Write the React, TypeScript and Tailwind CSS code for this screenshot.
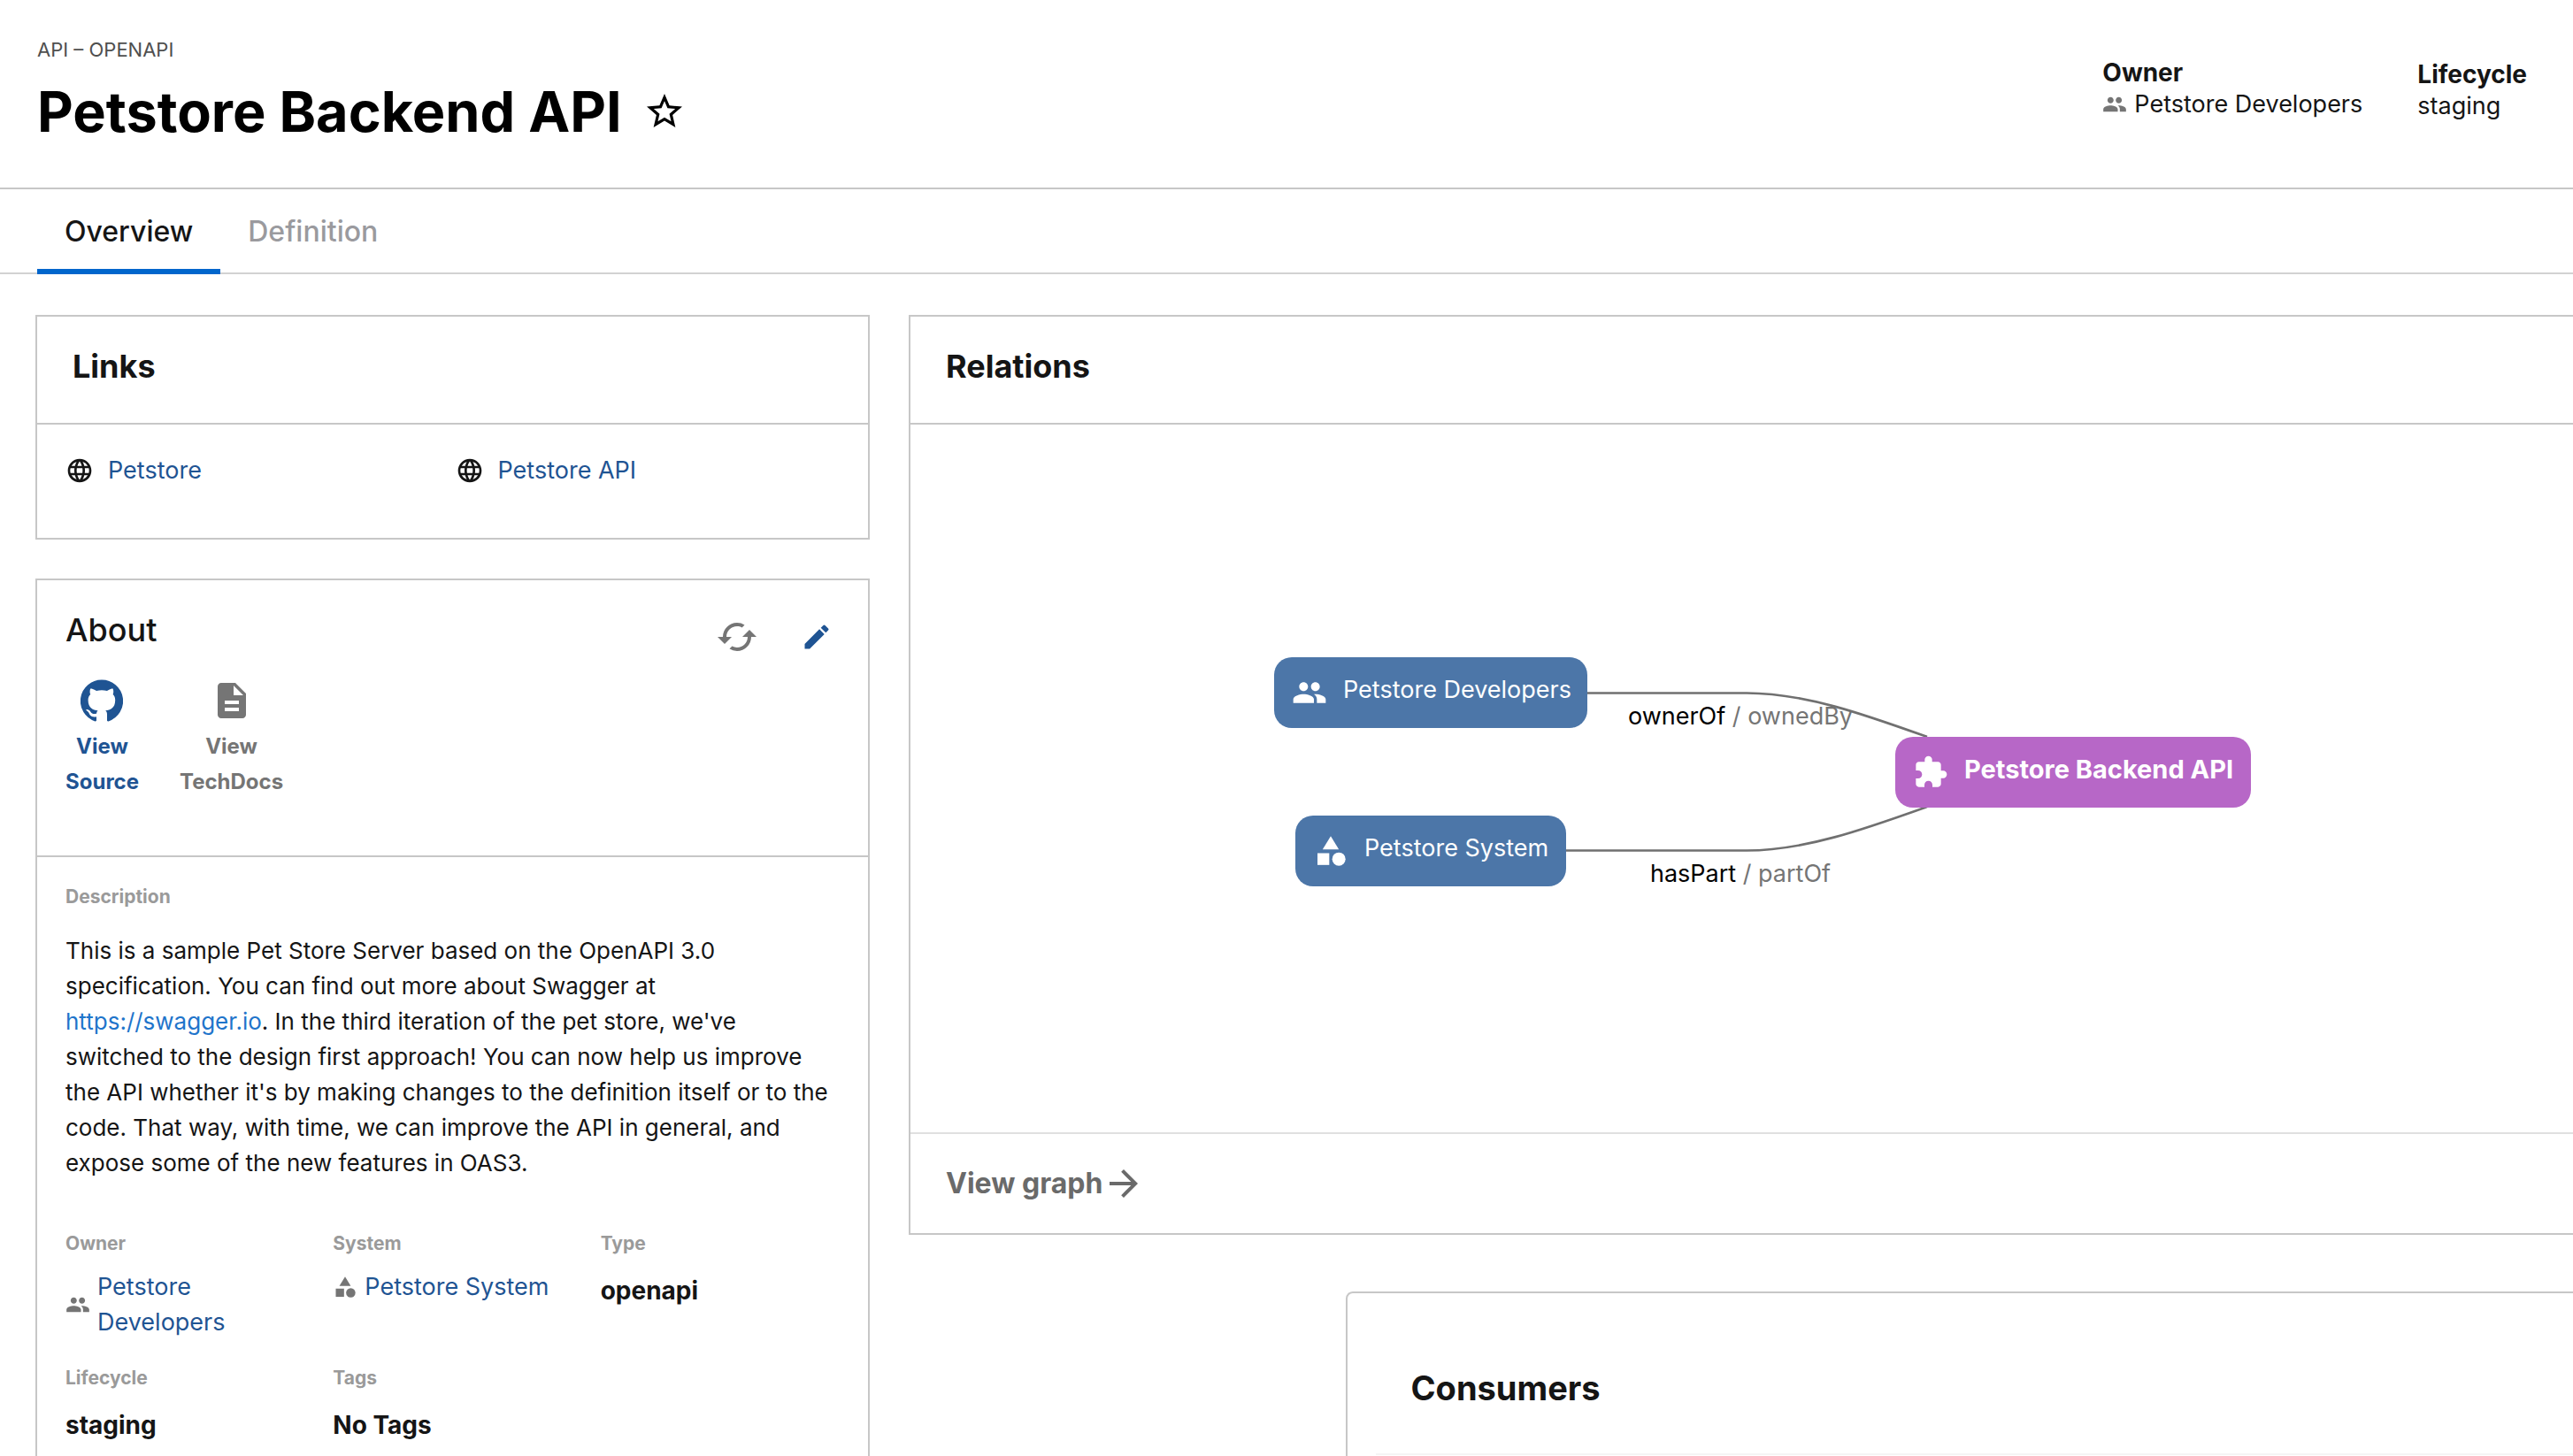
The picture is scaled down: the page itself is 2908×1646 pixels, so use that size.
import React from "react";
import {
  MdArrowForward,
  MdCached,
  MdCategory,
  MdDescription,
  MdEdit,
  MdExtension,
  MdLanguage,
  MdPeople,
  MdStarBorder,
} from "react-icons/md";

function GitHubIcon({ className }: { className?: string }) {
  return (
    <svg viewBox="0 0 24 24" fill="currentColor" className={className} aria-hidden="true">
      <path d="M12 .3a12 12 0 0 0-3.8 23.4c.6.1.8-.3.8-.6v-2c-3.3.7-4-1.6-4-1.6-.6-1.4-1.4-1.8-1.4-1.8-1-.7.1-.7.1-.7 1.2 0 1.9 1.2 1.9 1.2 1 1.8 2.8 1.3 3.5 1 0-.8.4-1.3.7-1.6-2.7-.3-5.5-1.3-5.5-6 0-1.2.5-2.3 1.3-3.1-.2-.4-.6-1.6 0-3.2 0 0 1-.3 3.4 1.2a11.5 11.5 0 0 1 6 0c2.3-1.5 3.3-1.2 3.3-1.2.6 1.6.2 2.8 0 3.2.9.8 1.3 1.9 1.3 3.2 0 4.6-2.8 5.6-5.5 5.9.5.4.9 1 .9 2.2v3.3c0 .3.1.7.8.6A12 12 0 0 0 12 .3" />
    </svg>
  );
}

function PageHeader() {
  return (
    <header className="flex items-start justify-between border-b-2 border-[#c7c7c7] pt-10 pr-[52px] pb-[46px] pl-[42px]">
      <div>
        <p className="text-[22px] leading-8 text-[#4f4f4f]">API – OPENAPI</p>
        <div className="mt-3.5 flex items-center gap-6">
          <h1 className="text-[63px] leading-20 font-bold text-black">Petstore Backend API</h1>
          <button type="button" aria-label="Add to favorites" className="text-black">
            <MdStarBorder className="size-12" />
          </button>
        </div>
      </div>
      <dl className="flex gap-[62px] pt-6 leading-9">
        <div>
          <dt className="text-[28px] font-bold">Owner</dt>
          <dd className="flex items-center gap-2 text-[27px]">
            <MdPeople className="size-7 text-[#757575]" />
            <a href="#owner">Petstore Developers</a>
          </dd>
        </div>
        <div className="pt-0.5">
          <dt className="text-[28px] font-bold">Lifecycle</dt>
          <dd className="text-[27px]">staging</dd>
        </div>
      </dl>
    </header>
  );
}

function Tabs() {
  return (
    <nav role="tablist" className="flex h-24 border-b-2 border-[#d2d2d2] pl-[42px] text-[32px] font-medium">
      <button
        type="button"
        role="tab"
        aria-selected="true"
        className="-mb-0.5 border-b-6 border-[#0066cc] px-[31px] pt-1.5"
      >
        Overview
      </button>
      <button
        type="button"
        role="tab"
        aria-selected="false"
        className="-mb-0.5 border-b-6 border-transparent px-[31px] pt-1.5 text-[#9a9a9e]"
      >
        Definition
      </button>
    </nav>
  );
}

function CardHeader({ title }: { title: string }) {
  return (
    <div className="flex h-[122px] items-center border-b-2 border-[#c7c7c7] px-10 pb-2">
      <h2 className="text-[36px] font-bold">{title}</h2>
    </div>
  );
}

function LinksCard() {
  return (
    <section className="border-2 border-[#c7c7c7]">
      <CardHeader title="Links" />
      <ul className="grid grid-cols-2 gap-1.5 px-8 pt-8 pb-14">
        {["Petstore", "Petstore API"].map((label) => (
          <li key={label} className="flex h-10 items-center gap-4">
            <MdLanguage className="size-8" />
            <a href="#link" className="text-[27px] text-[#1f5493]">
              {label}
            </a>
          </li>
        ))}
      </ul>
    </section>
  );
}

function Field({ label, bold, children }: { label: string; bold?: boolean; children: React.ReactNode }) {
  return (
    <div className="pr-8">
      <dt className="text-[21px] leading-[26px] font-bold text-[#9a9a9a]">{label}</dt>
      <dd className={bold ? "mt-5 text-[28px] leading-10 font-bold" : "mt-4 text-[27px] leading-10"}>{children}</dd>
    </div>
  );
}

function AboutCard() {
  return (
    <section className="border-2 border-[#c7c7c7]">
      <div className="border-b-2 border-[#c7c7c7] pt-10 pr-10 pb-[63px] pl-8">
        <div className="flex items-start justify-between">
          <h2 className="text-[36px] leading-8 font-medium">About</h2>
          <div className="flex items-center gap-12">
            <button type="button" aria-label="Refresh" className="text-[#757575]">
              <MdCached className="size-12" />
            </button>
            <button type="button" aria-label="Edit" className="text-[#1f5493]">
              <MdEdit className="size-9" />
            </button>
          </div>
        </div>
        <nav className="mt-6 flex gap-[46px] text-center text-[24px] leading-10 font-bold">
          <a href="#source" className="flex flex-col items-center gap-2 text-[#1f5493]">
            <GitHubIcon className="size-12" />
            <span>
              View
              <br />
              Source
            </span>
          </a>
          <a href="#techdocs" className="flex flex-col items-center gap-2 text-[#757575]">
            <MdDescription className="size-12" />
            <span>
              View
              <br />
              TechDocs
            </span>
          </a>
        </nav>
      </div>
      <div className="px-8 pt-8 pb-14">
        <h3 className="text-[21px] leading-[26px] font-bold text-[#9a9a9a]">Description</h3>
        <p className="mt-7 text-[26px] leading-10">
          This is a sample Pet Store Server based on the OpenAPI 3.0 specification. You can find out more about
          Swagger at{" "}
          <a href="#swagger" className="text-[#1f75cb]">
            https://swagger.io
          </a>
          . In the third iteration of the pet store, we've switched to the design first approach! You can now help
          us improve the API whether it's by making changes to the definition itself or to the code. That way, with
          time, we can improve the API in general, and expose some of the new features in OAS3.
        </p>
        <dl className="mt-[58px] -mr-8 grid grid-cols-3 gap-y-[30px]">
          <Field label="Owner">
            <span className="flex items-center gap-2">
              <MdPeople className="size-7 shrink-0 text-[#757575]" />
              <a href="#owner" className="text-[#1f5493]">
                Petstore Developers
              </a>
            </span>
          </Field>
          <Field label="System">
            <span className="flex items-center gap-2">
              <MdCategory className="size-7 shrink-0 text-[#757575]" />
              <a href="#system" className="whitespace-nowrap text-[#1f5493]">
                Petstore System
              </a>
            </span>
          </Field>
          <Field label="Type" bold>
            openapi
          </Field>
          <Field label="Lifecycle" bold>
            staging
          </Field>
          <Field label="Tags" bold>
            No Tags
          </Field>
        </dl>
      </div>
    </section>
  );
}

function RelationGraph() {
  const node = "absolute flex h-20 items-center gap-[18px] rounded-[20px] pl-5 text-white whitespace-nowrap";
  return (
    <div className="relative h-[260px] w-[1104px] text-[27px]">
      <a href="#developers" className={`${node} top-0 left-0 w-[354px] bg-[#4c76a8]`}>
        <MdPeople className="size-10" />
        <span className="pb-1.5">Petstore Developers</span>
      </a>
      <a href="#system" className={`${node} top-[179px] left-[24px] w-[306px] bg-[#4c76a8]`}>
        <MdCategory className="size-10" />
        <span className="pb-1.5">Petstore System</span>
      </a>
      <p className="absolute top-[47px] left-[387px] w-[280px] text-center leading-10 text-[#757575]">
        <span className="text-black">ownerOf</span> / ownedBy
      </p>
      <p className="absolute top-[225px] left-[387px] w-[280px] text-center leading-10 text-[#757575]">
        <span className="text-black">hasPart</span> / partOf
      </p>
      <svg
        viewBox="0 0 1104 260"
        className="pointer-events-none absolute inset-0"
        fill="none"
        stroke="#707070"
        strokeWidth="2.6"
        aria-hidden="true"
      >
        <path d="M354 40.5H534C600 40.5 668 65 738 90" />
        <path d="M330 218.5H534C600 218.5 668 194 738 169" />
      </svg>
      <a href="#api" className={`${node} top-[90px] left-[702px] w-[402px] bg-[#b767c7] text-[29px] font-bold`}>
        <MdExtension className="size-10" />
        <span className="pb-1.5">Petstore Backend API</span>
      </a>
    </div>
  );
}

function RelationsCard() {
  return (
    <section className="border-2 border-[#c7c7c7]">
      <CardHeader title="Relations" />
      <div className="flex h-[800px] items-center justify-center pb-3.5">
        <RelationGraph />
      </div>
      <div className="flex h-[114px] items-center border-t-2 border-[#e0e0e0] px-10">
        <a href="#graph" className="flex items-center text-[32px] font-bold text-[#6a6a6a]">
          View graph
          <MdArrowForward className="size-12" />
        </a>
      </div>
    </section>
  );
}

function ConsumersCard() {
  return (
    <section className="rounded-lg border-2 border-[#c7c7c7] px-8 pt-[72px] pb-16">
      <h2 className="px-10 text-[38px] leading-[70px] font-bold">Consumers</h2>
      <div className="mt-[39px] border-t-2 border-[#f5f5f5]" />
    </section>
  );
}

export default function App() {
  return (
    <div className="h-screen overflow-hidden bg-white font-['Inter',sans-serif] text-[#151515]">
      <PageHeader />
      <Tabs />
      <main className="-mr-[49px] grid grid-cols-3 items-start gap-[44px] pt-[46px] pl-10">
        <div className="flex flex-col gap-[44px]">
          <LinksCard />
          <AboutCard />
        </div>
        <div className="col-span-2 flex flex-col gap-16">
          <RelationsCard />
          <div className="grid grid-cols-4 gap-[44px]">
            <div className="col-span-3 col-start-2">
              <ConsumersCard />
            </div>
          </div>
        </div>
      </main>
    </div>
  );
}
